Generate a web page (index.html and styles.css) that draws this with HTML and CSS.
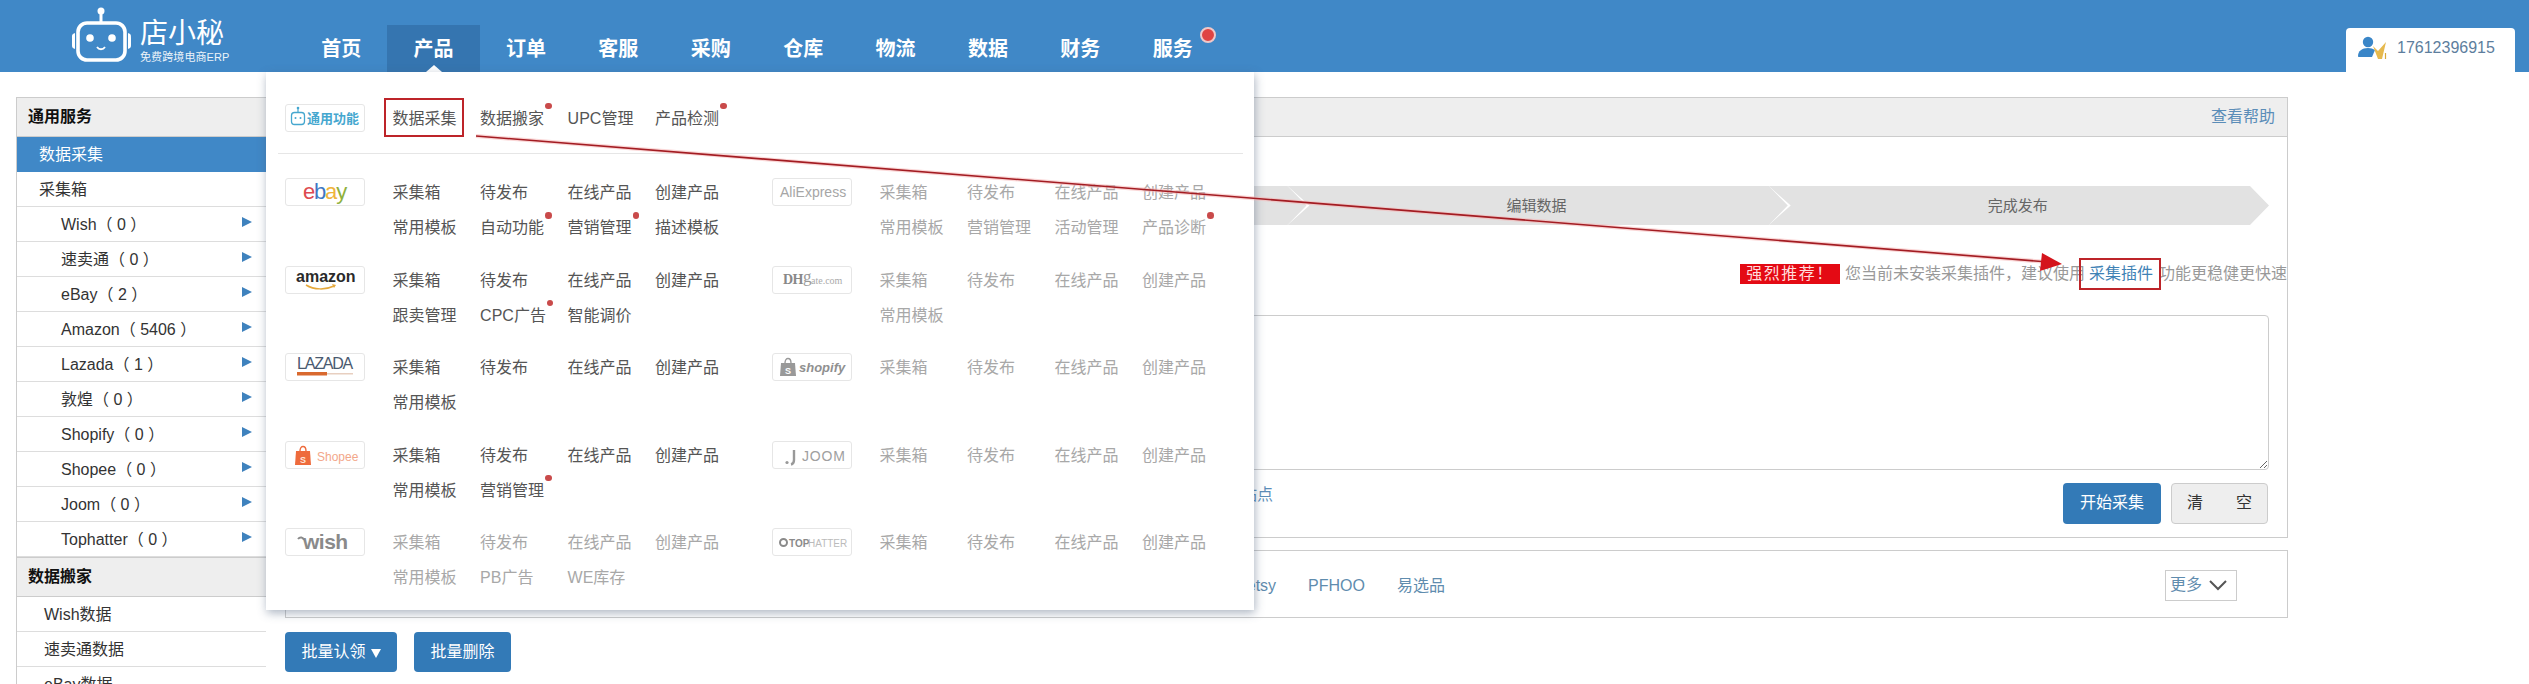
FILE: index.html
```html
<!DOCTYPE html>
<html lang="zh-CN">
<head>
<meta charset="utf-8">
<title>店小秘</title>
<link rel="stylesheet" href="styles.css">
</head>
<body>
<header class="topbar">
  <div class="brand">
    <svg class="brand-bot" viewBox="0 0 62 56" width="62" height="56">
      <circle cx="30" cy="4" r="3.5" fill="#fff"/>
      <path d="M30 6v9" stroke="#fff" stroke-width="3" fill="none"/>
      <rect x="7" y="16" width="47" height="37" rx="9" fill="none" stroke="#fff" stroke-width="3.6"/>
      <path d="M4 26c-3 1-3 2-3 5v6c0 3 0 4 3 5zM57 26c3 1 3 2 3 5v6c0 3 0 4-3 5z" fill="#fff"/>
      <circle cx="19" cy="31" r="3.8" fill="#fff"/>
      <circle cx="41" cy="31" r="3.8" fill="#fff"/>
      <path d="M26 40c2 3 6 3 8 0" stroke="#fff" stroke-width="1.8" fill="none"/>
    </svg>
    <div class="brand-text">
      <div class="brand-name">店小秘</div>
      <div class="brand-tag">免费跨境电商ERP</div>
    </div>
  </div>
  <nav class="nav">
    <a class="nav-item">首页</a>
    <a class="nav-item active">产品</a>
    <a class="nav-item">订单</a>
    <a class="nav-item">客服</a>
    <a class="nav-item">采购</a>
    <a class="nav-item">仓库</a>
    <a class="nav-item">物流</a>
    <a class="nav-item">数据</a>
    <a class="nav-item">财务</a>
    <a class="nav-item badge-dot">服务</a>
  </nav>
  <div class="user">
    <svg viewBox="0 0 32 24" width="32" height="24">
      <circle cx="10" cy="6" r="5.2" fill="#3a86c8"/>
      <path d="M0 20c0-5 4-8 10-8 3 0 5 .7 7 2l-3 7H1c-.7 0-1-.4-1-1z" fill="#3a86c8"/>
      <path d="M15 10l5 5 8-9-4 17h-4z" fill="#e6b94e"/>
      <path d="M27.500 17v6" stroke="#d9a93a" stroke-width="1.200"/>
    </svg>
    <span>17612396915</span>
  </div>
</header>

<main class="page">
  <aside class="side">
    <div class="side-head">通用服务</div>
    <a class="side-row current">数据采集</a>
    <a class="side-row">采集箱</a>
    <a class="side-row sub">Wish（ 0 ）<i></i></a>
    <a class="side-row sub">速卖通（ 0 ）<i></i></a>
    <a class="side-row sub">eBay（ 2 ）<i></i></a>
    <a class="side-row sub">Amazon（ 5406 ）<i></i></a>
    <a class="side-row sub">Lazada（ 1 ）<i></i></a>
    <a class="side-row sub">敦煌（ 0 ）<i></i></a>
    <a class="side-row sub">Shopify（ 0 ）<i></i></a>
    <a class="side-row sub">Shopee（ 0 ）<i></i></a>
    <a class="side-row sub">Joom（ 0 ）<i></i></a>
    <a class="side-row sub">Tophatter（ 0 ）<i></i></a>
    <div class="side-head">数据搬家</div>
    <a class="side-row data">Wish数据</a>
    <a class="side-row data">速卖通数据</a>
    <a class="side-row data">eBay数据</a>
  </aside>

  <section class="content">
    <div class="panel">
      <div class="panel-head"><a class="link">查看帮助</a></div>
      <div class="panel-body">
        <div class="steps">
          <div class="step"></div>
          <div class="step"></div>
          <div class="step">编辑数据</div>
          <div class="step">完成发布</div>
        </div>
        <div class="notice">
          <span class="notice-tag">强烈推荐！</span>
          <span>您当前未安装采集插件，建议使用</span>
          <a class="notice-link">采集插件</a>
          <span>功能更稳健更快速</span>
        </div>
        <textarea class="urls"></textarea>
        <div class="actions">
          <a class="hint">站点</a>
          <div class="action-btns">
            <button class="btn primary start">开始采集</button>
            <button class="btn clear"><span>清</span><span>空</span></button>
          </div>
        </div>
      </div>
    </div>

    <div class="panel platforms-panel">
      <div class="platforms">
        <a>etsy</a><a>PFHOO</a><a>易选品</a>
      </div>
      <div class="more">更多
        <svg viewBox="0 0 20 12" width="20" height="12"><path d="M2 2l8 8 8-8" fill="none" stroke="#555" stroke-width="2"/></svg>
      </div>
    </div>

    <div class="batch">
      <button class="btn primary claim">批量认领<small></small></button>
      <button class="btn primary remove">批量删除</button>
    </div>
  </section>
</main>

<div class="menu">
  <div class="menu-top">
    <div class="m-logo">
      <svg viewBox="0 0 78 26" width="78" height="26">
        <path d="M12 3v4" stroke="#45a7cf" stroke-width="1.200"/>
        <circle cx="12" cy="3" r="1.300" fill="#45a7cf"/>
        <rect x="5.500" y="7.500" width="13" height="12" rx="3" fill="none" stroke="#45a7cf" stroke-width="1.300"/>
        <circle cx="9.500" cy="13" r="1" fill="#45a7cf"/><circle cx="14.500" cy="13" r="1" fill="#45a7cf"/>
        <text class="lg-cn" x="21" y="18">通用功能</text>
      </svg>
    </div>
    <div class="m-items">
      <a class="m-item marked">数据采集</a>
      <a class="m-item dot">数据搬家</a>
      <a class="m-item">UPC管理</a>
      <a class="m-item dot">产品检测</a>
    </div>
  </div>
  <div class="menu-divider"></div>
  <div class="menu-grid">
    <div class="m-row">
      <div class="m-logo">
        <svg viewBox="0 0 78 26" width="78" height="26"><text class="lg-ebay" x="17" y="20"><tspan fill="#dd4a50">e</tspan><tspan fill="#3f78c4">b</tspan><tspan fill="#efb43c">a</tspan><tspan fill="#8fb13c">y</tspan></text></svg>
      </div>
      <div class="m-items">
        <a class="m-item">采集箱</a><a class="m-item">待发布</a><a class="m-item">在线产品</a><a class="m-item">创建产品</a>
        <a class="m-item">常用模板</a><a class="m-item dot">自动功能</a><a class="m-item dot">营销管理</a><a class="m-item">描述模板</a>
      </div>
    </div>
    <div class="m-row">
      <div class="m-logo">
        <svg viewBox="0 0 78 26" width="78" height="26"><text class="lg-plain" x="7" y="18">AliExpress</text></svg>
      </div>
      <div class="m-items">
        <a class="m-item off">采集箱</a><a class="m-item off">待发布</a><a class="m-item off">在线产品</a><a class="m-item off">创建产品</a>
        <a class="m-item off">常用模板</a><a class="m-item off">营销管理</a><a class="m-item off">活动管理</a><a class="m-item off dot">产品诊断</a>
      </div>
    </div>
    <div class="m-row">
      <div class="m-logo">
        <svg viewBox="0 0 78 26" width="78" height="26">
          <text class="lg-amazon" x="10" y="15">amazon</text>
          <path d="M20 18c8 5 20 5 28 1" fill="none" stroke="#e5a93c" stroke-width="1.500"/>
          <path d="M46 17l4 1-2 3z" fill="#e5a93c"/>
        </svg>
      </div>
      <div class="m-items">
        <a class="m-item">采集箱</a><a class="m-item">待发布</a><a class="m-item">在线产品</a><a class="m-item">创建产品</a>
        <a class="m-item">跟卖管理</a><a class="m-item dot">CPC广告</a><a class="m-item">智能调价</a>
      </div>
    </div>
    <div class="m-row">
      <div class="m-logo">
        <svg viewBox="0 0 78 26" width="78" height="26">
          <text class="lg-dh" x="10" y="17">DH</text>
          <text class="lg-g" x="30" y="15">g</text>
          <text class="lg-gate" x="38" y="17">ate.com</text>
        </svg>
      </div>
      <div class="m-items">
        <a class="m-item off">采集箱</a><a class="m-item off">待发布</a><a class="m-item off">在线产品</a><a class="m-item off">创建产品</a>
        <a class="m-item off">常用模板</a>
      </div>
    </div>
    <div class="m-row">
      <div class="m-logo">
        <svg viewBox="0 0 78 26" width="78" height="26">
          <text class="lg-lazada" x="11" y="15">LAZADA</text>
          <rect x="11" y="18" width="30" height="3.500" fill="#d9692e"/>
          <rect x="41" y="19" width="26" height="1.500" fill="#e8cfc0"/>
        </svg>
      </div>
      <div class="m-items">
        <a class="m-item">采集箱</a><a class="m-item">待发布</a><a class="m-item">在线产品</a><a class="m-item">创建产品</a>
        <a class="m-item">常用模板</a>
      </div>
    </div>
    <div class="m-row">
      <div class="m-logo">
        <svg viewBox="0 0 78 26" width="78" height="26">
          <path d="M8 9h14l1 13H7z" fill="#999"/>
          <path d="M12 9c0-6 6-6 6 0" fill="none" stroke="#999" stroke-width="1.400"/>
          <text class="lg-s" x="12" y="20">S</text>
          <text class="lg-shopify" x="26" y="18">shopify</text>
        </svg>
      </div>
      <div class="m-items">
        <a class="m-item off">采集箱</a><a class="m-item off">待发布</a><a class="m-item off">在线产品</a><a class="m-item off">创建产品</a>
      </div>
    </div>
    <div class="m-row">
      <div class="m-logo">
        <svg viewBox="0 0 78 26" width="78" height="26">
          <path d="M10 9h14l1 14H9z" fill="#ee6b3c"/>
          <path d="M14 9c0-6 6-6 6 0" fill="none" stroke="#ee6b3c" stroke-width="1.400"/>
          <text class="lg-s light" x="14" y="21">S</text>
          <text class="lg-shopee" x="31" y="19">Shopee</text>
        </svg>
      </div>
      <div class="m-items">
        <a class="m-item">采集箱</a><a class="m-item">待发布</a><a class="m-item">在线产品</a><a class="m-item">创建产品</a>
        <a class="m-item">常用模板</a><a class="m-item dot">营销管理</a>
      </div>
    </div>
    <div class="m-row">
      <div class="m-logo">
        <svg viewBox="0 0 78 26" width="78" height="26">
          <path d="M21 8v10c0 2.500-1 4-3 4.500" fill="none" stroke="#999" stroke-width="2.400"/>
          <circle cx="14" cy="20.500" r="1.600" fill="#999"/>
          <text class="lg-joom" x="29" y="19">JOOM</text>
        </svg>
      </div>
      <div class="m-items">
        <a class="m-item off">采集箱</a><a class="m-item off">待发布</a><a class="m-item off">在线产品</a><a class="m-item off">创建产品</a>
      </div>
    </div>
    <div class="m-row">
      <div class="m-logo">
        <svg viewBox="0 0 78 26" width="78" height="26">
          <path d="M12 10c2-2.500 5-2 6 1" fill="none" stroke="#8a8a8a" stroke-width="2"/>
          <text class="lg-wish" x="17" y="20">wish</text>
        </svg>
      </div>
      <div class="m-items">
        <a class="m-item off">采集箱</a><a class="m-item off">待发布</a><a class="m-item off">在线产品</a><a class="m-item off">创建产品</a>
        <a class="m-item off">常用模板</a><a class="m-item off">PB广告</a><a class="m-item off">WE库存</a>
      </div>
    </div>
    <div class="m-row">
      <div class="m-logo">
        <svg viewBox="0 0 78 26" width="78" height="26">
          <circle cx="10.500" cy="13.500" r="3.500" fill="none" stroke="#8a8a8a" stroke-width="2"/>
          <text class="lg-top" x="16" y="17.500">TOP</text>
          <text class="lg-hatter" x="35" y="17.500">HATTER</text>
        </svg>
      </div>
      <div class="m-items">
        <a class="m-item off">采集箱</a><a class="m-item off">待发布</a><a class="m-item off">在线产品</a><a class="m-item off">创建产品</a>
      </div>
    </div>
  </div>
</div>

<svg class="callout" viewBox="0 0 2529 684" width="2529" height="684">
  <path d="M476 136L2048 262" stroke="#f5b5b5" stroke-width="4" opacity=".55" fill="none"/>
  <path d="M476 136L2048 262" stroke="#a31c22" stroke-width="1.600" fill="none"/>
  <path d="M2062 264L2042 253L2040 271z" fill="#d4141c"/>
</svg>
</body>
</html>
```
FILE: styles.css
```css
* { box-sizing: border-box; }
html, body { margin: 0; padding: 0; }
body {
  position: relative;
  width: 2529px;
  height: 684px;
  overflow: hidden;
  background: #fff;
  color: #333;
  font: 16px/1.4 "Liberation Sans", "Noto Sans CJK SC", sans-serif;
}
a { color: inherit; text-decoration: none; }

/* top bar */
.topbar { display: flex; height: 72px; background: #4088c7; color: #fff; }
.brand { display: flex; width: 295px; padding: 7px 0 0 71px; }
.brand-bot { display: block; flex: none; }
.brand-text { margin-left: 7px; padding-top: 11px; }
.brand-name { font-size: 28px; line-height: 32px; }
.brand-tag { font-size: 11px; line-height: 12px; margin-top: 1px; opacity: .9; white-space: nowrap; letter-spacing: .1px; }
.nav { display: flex; align-self: flex-end; height: 47px; }
.nav-item {
  position: relative;
  display: flex;
  align-items: center;
  justify-content: center;
  width: 92.4px;
  font-size: 20px;
  font-weight: 700;
}
.nav-item.active { background: #3575b0; }
.nav-item.active::after {
  content: "";
  position: absolute;
  left: 50%;
  bottom: 0;
  margin-left: -8px;
  border: solid transparent;
  border-width: 0 8px 7px;
  border-bottom-color: #fff;
}
.badge-dot::before {
  content: "";
  position: absolute;
  top: 2px;
  right: 3px;
  width: 12px;
  height: 12px;
  border-radius: 50%;
  background: #df4444;
  border: 2px solid #f0c8c8;
}
.user {
  display: flex;
  align-items: center;
  gap: 7px;
  align-self: flex-end;
  width: 169px;
  height: 44px;
  margin: 0 14px 0 auto;
  padding: 0 0 4px 12px;
  background: #fff;
  border-radius: 4px 4px 0 0;
  color: #5d7e9d;
}

/* page */
.page { display: flex; align-items: flex-start; padding: 25px 0 0 16px; }
.side { width: 250px; flex: none; border-left: 1px solid #ccc; }
.side-head {
  display: flex;
  align-items: center;
  height: 40px;
  padding-left: 11px;
  background: #eee;
  border-bottom: 1px solid #ccc;
  border-top: 1px solid #ccc;
  color: #111;
  font-weight: 700;
}
.side-row {
  position: relative;
  display: flex;
  align-items: center;
  height: 35px;
  padding: 2px 0 0 22px;
  border-bottom: 1px solid #ddd;
}
.side-row.current { background: #4088c7; color: #fff; border-bottom: 0; }
.side-row.sub { padding-left: 44px; }
.side-row.data { padding-left: 27px; }
.side-row i {
  position: absolute;
  left: 225px;
  top: 10px;
  border: solid transparent;
  border-width: 5px 0 5px 10px;
  border-left-color: #3f82bd;
}

.content { width: 2003px; margin-left: 19px; flex: none; }
.panel { border: 1px solid #ccc; }
.panel-head {
  display: flex;
  align-items: center;
  justify-content: flex-end;
  height: 39px;
  padding: 0 12px 0 16px;
  background: #eee;
  border-bottom: 1px solid #ccc;
}
.link { color: #5b8db8; }
.panel-body { padding: 49px 0 13px; }
.steps { display: flex; height: 39px; margin: 0 18px 0 39px; }
.step {
  flex: 1;
  display: flex;
  align-items: center;
  justify-content: center;
  padding-right: 2px;
  background: #e2e2e2;
  color: #666;
  font-size: 15px;
  clip-path: polygon(0 0, calc(100% - 19px) 0, 100% 50%, calc(100% - 19px) 100%, 0 100%, 22px 50%);
}
.step + .step { margin-left: -19px; }
.notice {
  display: flex;
  align-items: center;
  justify-content: flex-end;
  height: 32px;
  margin-top: 33px;
  color: #999;
}
.notice-tag {
  width: 100px;
  height: 20px;
  margin-right: 5px;
  background: #e40a14;
  color: #ffdcdc;
  line-height: 20px;
  letter-spacing: 1.5px;
  text-align: center;
}
.notice-link {
  position: relative;
  margin: 0 6px 0 4px;
  color: #3f82b5;
}
.notice-link::after {
  content: "";
  position: absolute;
  left: -10px;
  right: -8px;
  top: -5px;
  bottom: -5px;
  border: 2px solid #bd2429;
}
.urls {
  display: block;
  width: 1967px;
  height: 155px;
  margin: 25px 19px 0 16px;
  border: 1px solid #ccc;
  border-radius: 4px;
  background: #fff;
  outline: none;
}
.actions { display: flex; margin: 13px 19px 0 16px; }
.hint { width: 971px; line-height: 24px; text-align: right; color: #5b8db8; }
.action-btns { display: flex; gap: 10px; margin-left: auto; }
.btn {
  height: 41px;
  padding: 0;
  border: 1px solid transparent;
  border-radius: 4px;
  font: inherit;
}
.primary { background: #337ab7; color: #fff; }
.start { width: 98px; }
.clear {
  display: flex;
  align-items: center;
  justify-content: space-between;
  width: 97px;
  padding: 0 15px;
  background: #eee;
  border-color: #ccc;
  color: #333;
}
.platforms-panel {
  display: flex;
  align-items: center;
  height: 68px;
  margin-top: 12px;
}
.platforms {
  display: flex;
  justify-content: flex-end;
  gap: 32px;
  width: 1159px;
  padding-top: 5px;
  color: #5f8cae;
}
.more {
  display: flex;
  align-items: center;
  justify-content: space-between;
  width: 72px;
  height: 31px;
  margin: 2px 50px 0 auto;
  padding: 0 8px 0 4px;
  border: 1px solid #ccc;
  color: #5f8cae;
}
.batch { display: flex; gap: 17px; margin-top: 14px; }
.batch .btn { height: 40px; }
.claim { width: 112px; }
.claim small {
  display: inline-block;
  margin-left: 5px;
  vertical-align: -1px;
  border: solid transparent;
  border-width: 9px 5px 0;
  border-top-color: #fff;
}
.remove { width: 97px; }

/* mega menu over the page */
.menu {
  position: absolute;
  left: 266px;
  top: 72px;
  width: 988px;
  height: 538px;
  background: #fff;
  box-shadow: 1px 3px 9px rgba(70, 90, 120, .45);
}
.menu-top { display: flex; padding: 28.5px 0 17px 19px; }
.menu-divider { height: 1px; margin: 0 11.5px; background: #e6e6e6; }
.menu-grid {
  display: grid;
  grid-template-columns: 487px 487px;
  grid-auto-rows: 70px;
  row-gap: 17.5px;
  margin: 21.7px 0 0 19px;
}
.m-row { display: flex; align-items: flex-start; }
.m-logo {
  flex: none;
  width: 80px;
  height: 28px;
  margin: 3px 27.6px 0 0;
  border: 1px solid #e6e6e6;
  border-radius: 3px;
}
.m-logo svg { display: block; }
.m-items {
  display: grid;
  grid-template-columns: repeat(4, 87.5px);
  grid-auto-rows: 35px;
  justify-items: start;
}
.m-item {
  position: relative;
  display: block;
  line-height: 35px;
  color: #555;
  white-space: nowrap;
}
.m-item.off { color: #a8a8a8; }
.m-item.dot::after {
  content: "";
  position: absolute;
  left: calc(100% + 1px);
  top: calc(50% - 15.5px);
  width: 6.5px;
  height: 6.5px;
  border-radius: 50%;
  background: #c94a4a;
}
.marked::before {
  content: "";
  position: absolute;
  left: -8.5px;
  right: -7px;
  top: -3px;
  bottom: -1px;
  border: 2px solid #bd2429;
}

/* platform logos (svg text) */
.lg-cn { font: 700 13px "Noto Sans CJK SC", sans-serif; fill: #45a7cf; }
.lg-ebay { font: 400 22px "Liberation Sans", sans-serif; letter-spacing: -1.2px; }
.lg-plain { font: 400 14px "Liberation Sans", sans-serif; fill: #a6a6a6; }
.lg-amazon { font: 700 16px "Liberation Sans", sans-serif; fill: #2a2a2a; }
.lg-dh { font: 700 14px "Liberation Serif", serif; fill: #888; letter-spacing: -.5px; }
.lg-g { font: 400 17px "Liberation Serif", serif; fill: #999; }
.lg-gate { font: 400 10px "Liberation Serif", serif; fill: #aaa; }
.lg-lazada { font: 400 16px "Liberation Sans", sans-serif; fill: #4a5a70; letter-spacing: -1.2px; }
.lg-s { font: 700 9px "Liberation Sans", sans-serif; fill: #fff; }
.lg-s.light { fill: #ffe6da; }
.lg-shopify { font: italic 700 13px "Liberation Sans", sans-serif; fill: #909090; }
.lg-shopee { font: 400 12px "Liberation Sans", sans-serif; fill: #f3a78a; }
.lg-joom { font: 400 14px "Liberation Sans", sans-serif; fill: #a0a0a0; letter-spacing: .8px; }
.lg-wish { font: 700 21px "Liberation Sans", sans-serif; fill: #8a8a8a; letter-spacing: -.5px; }
.lg-top { font: 700 10px "Liberation Sans", sans-serif; fill: #8a8a8a; }
.lg-hatter { font: 400 10px "Liberation Sans", sans-serif; fill: #bbb; }

/* hand-drawn annotation arrow */
.callout { position: absolute; left: 0; top: 0; pointer-events: none; }
```
